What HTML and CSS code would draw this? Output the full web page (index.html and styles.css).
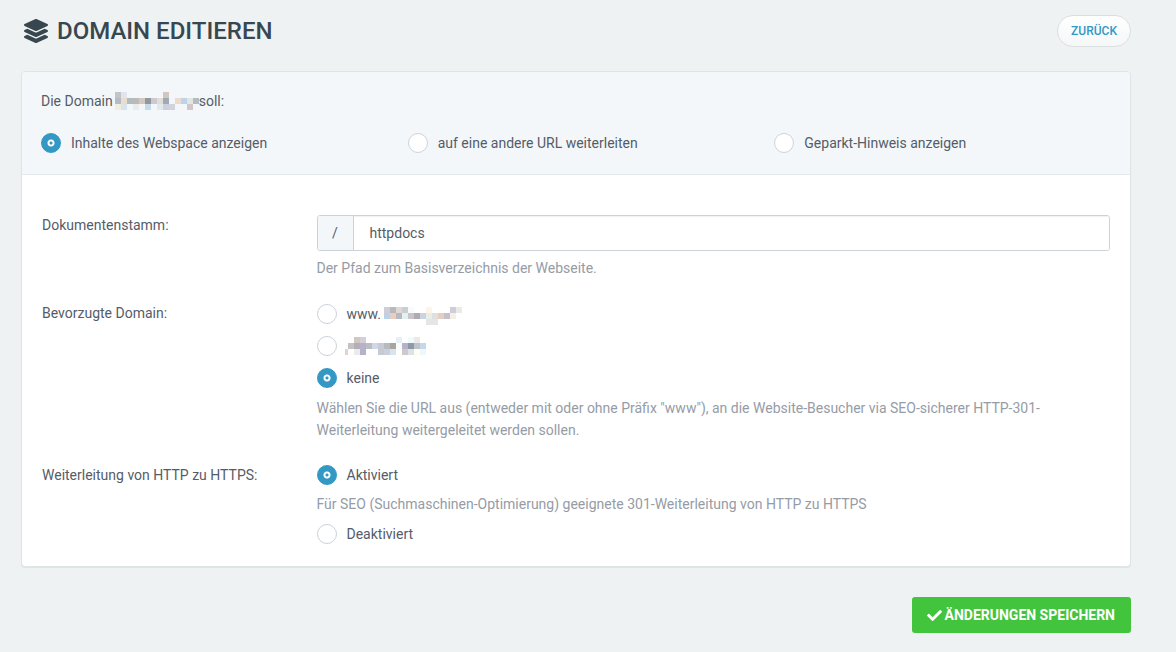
FILE: index.html
```html
<!DOCTYPE html>
<html lang="de">
<head>
<meta charset="utf-8">
<meta name="viewport" content="width=device-width, initial-scale=1">
<title>Domain editieren</title>
<link rel="stylesheet" href="styles.css">
</head>
<body>
<form class="page">
  <header class="page-header">
    <h1 class="title">
      <svg class="title-icon" viewBox="0 0 512 512" aria-hidden="true"><path d="M12.4 148l232.900 105.700c6.800 3.100 14.500 3.100 21.300 0L499.600 148c16.600-7.500 16.600-32.500 0-40L266.700 2.300a25.600 25.600 0 0 0-21.300 0L12.400 108c-16.600 7.500-16.600 32.500 0 40zM499.600 236.300l-58.100-26.300-161.600 73.300c-7.600 3.400-15.600 5.200-23.900 5.200s-16.300-1.700-23.900-5.200L70.500 210l-58.100 26.300c-16.600 7.500-16.600 32.500 0 40l232.900 105.600c6.800 3.100 14.500 3.100 21.300 0l233-105.600c16.600-7.500 16.600-32.500 0-40zM499.600 364.100l-57.900-26.200-161.800 73.400c-7.600 3.400-15.600 5.200-23.900 5.200s-16.300-1.700-23.900-5.200L70.300 337.900l-57.900 26.200c-16.600 7.500-16.600 32.500 0 40l232.900 105.600c6.800 3.100 14.500 3.100 21.300 0l233-105.600c16.600-7.500 16.600-32.500 0-40z"/></svg>
      DOMAIN EDITIEREN
    </h1>
    <button class="back" type="button">ZURÜCK</button>
  </header>

  <main class="card">
    <section class="mode" role="radiogroup" aria-labelledby="mode-label">
      <div class="line" id="mode-label">Die Domain
        <svg class="mosaic mosaic-head" width="84" height="18" viewBox="0 0 84 18" shape-rendering="crispEdges" aria-hidden="true">
          <path fill="#c3c4c5" d="M0 0h6v6h-6z"/><path fill="#dee5ef" d="M6 0h6v6h-6z"/><path fill="#d3c5c4" d="M48 0h6v6h-6z"/>
          <path fill="#b5bbc3" d="M0 6h6v6h-6zM78 6h6v6h-6z"/><path fill="#ecdccf" d="M6 6h6v6h-6zM60 6h6v6h-6z"/><path fill="#b2bcbf" d="M12 6h6v6h-6z"/><path fill="#bcbab8" d="M18 6h6v6h-6z"/><path fill="#d3c8bf" d="M24 6h6v6h-6z"/><path fill="#93979f" d="M30 6h6v6h-6z"/><path fill="#c9cbce" d="M36 6h6v6h-6z"/><path fill="#e4dcd8" d="M42 6h6v6h-6z"/><path fill="#9eaab4" d="M48 6h6v6h-6z"/><path fill="#bdd3e8" d="M66 6h6v6h-6z"/><path fill="#e0e6e2" d="M72 6h6v6h-6z"/>
          <path fill="#f2ebe2" d="M0 12h6v6h-6z"/><path fill="#d5e4ed" d="M6 12h6v6h-6z"/><path fill="#ebebea" d="M18 12h6v6h-6z"/><path fill="#c5dbe7" d="M30 12h6v6h-6z"/><path fill="#e0eaee" d="M42 12h6v6h-6z"/><path fill="#cdcfde" d="M48 12h6v6h-6z"/><path fill="#d1d5db" d="M54 12h6v6h-6z"/><path fill="#d0c7c8" d="M72 12h6v6h-6z"/>
        </svg>soll:</div>
      <div class="modes">
        <label class="option"><input class="radio" type="radio" name="mode" checked>Inhalte des Webspace anzeigen</label>
        <label class="option"><input class="radio" type="radio" name="mode">auf eine andere URL weiterleiten</label>
        <label class="option"><input class="radio" type="radio" name="mode">Geparkt-Hinweis anzeigen</label>
      </div>
    </section>

    <section class="settings">
      <div class="row">
        <label class="label" for="root">Dokumentenstamm:</label>
        <div class="control">
          <div class="path">
            <span class="prefix">/</span>
            <input class="path-input" id="root" type="text" value="httpdocs">
          </div>
          <p class="help">Der Pfad zum Basisverzeichnis der Webseite.</p>
        </div>
      </div>

      <div class="row">
        <div class="label" id="preferred-label">Bevorzugte Domain:</div>
        <div class="control" role="radiogroup" aria-labelledby="preferred-label">
          <div class="options">
            <label class="option"><input class="radio" type="radio" name="preferred"><span class="line line-low">www.
              <svg class="mosaic" width="78" height="18" viewBox="0 0 78 18" shape-rendering="crispEdges" aria-hidden="true">
                <path fill="#cfcdd9" d="M0 0h6v6h-6zM66 0h6v6h-6z"/><path fill="#b9b9bd" d="M6 0h6v6h-6zM12 6h6v6h-6z"/><path fill="#e0d8d2" d="M12 0h6v6h-6z"/><path fill="#cccdd2" d="M18 0h6v6h-6z"/><path fill="#f5fcff" d="M24 0h6v6h-6z"/><path fill="#fff4e6" d="M42 0h6v6h-6z"/><path fill="#e9e9ea" d="M72 0h6v6h-6z"/>
                <path fill="#bcd1ea" d="M0 6h6v6h-6z"/><path fill="#e5cfc2" d="M6 6h6v6h-6zM54 6h6v6h-6z"/><path fill="#e3f0f0" d="M18 6h6v6h-6z"/><path fill="#c8c4c8" d="M24 6h6v6h-6z"/><path fill="#adabb4" d="M30 6h6v6h-6z"/><path fill="#cbd3de" d="M36 6h6v6h-6z"/><path fill="#e8efe8" d="M42 6h6v6h-6z"/><path fill="#dfe1e0" d="M48 6h6v6h-6z"/><path fill="#c4c1cc" d="M60 6h6v6h-6z"/><path fill="#f5f0e6" d="M66 6h6v6h-6z"/>
                <path fill="#e5e5e5" d="M42 12h12v6h-12z"/>
              </svg></span></label>
            <label class="option"><input class="radio" type="radio" name="preferred" aria-label="Ohne www">
              <svg class="mosaic mosaic-bare" width="81" height="18" viewBox="3 0 81 18" shape-rendering="crispEdges" aria-hidden="true">
                <path fill="#d3c6bf" d="M12 0h6v6h-6z"/><path fill="#d3cfd6" d="M18 0h6v6h-6z"/><path fill="#e6f1f7" d="M54 0h6v6h-6z"/><path fill="#effaff" d="M66 0h6v6h-6z"/><path fill="#ede9e8" d="M72 0h6v6h-6z"/>
                <path fill="#c3c3c6" d="M6 6h6v6h-6z"/><path fill="#b2b0b6" d="M12 6h6v6h-6z"/><path fill="#b6b2ca" d="M18 6h6v12h-6zM60 6h6v6h-6z"/><path fill="#bbbdc1" d="M24 6h6v6h-6z"/><path fill="#cfd8e7" d="M30 6h6v6h-6z"/><path fill="#c5cad3" d="M36 6h6v12h-6z"/><path fill="#b6bac2" d="M42 6h6v6h-6z"/><path fill="#aaa59f" d="M48 6h6v6h-6z"/><path fill="#fafdff" d="M54 6h6v6h-6z"/><path fill="#8f98a6" d="M66 6h6v6h-6z"/><path fill="#bdc5cc" d="M72 6h6v6h-6z"/><path fill="#c4d8ea" d="M78 6h6v6h-6z"/>
                <path fill="#e8d2c8" d="M3 12h3v6h-3z"/><path fill="#ebebeb" d="M12 12h6v6h-6z"/><path fill="#c9d0dc" d="M42 12h6v6h-6z"/><path fill="#d6e5ef" d="M48 12h6v6h-6z"/><path fill="#cfc9c9" d="M60 12h6v6h-6z"/><path fill="#dbe2ea" d="M66 12h6v6h-6z"/><path fill="#fffdef" d="M72 12h6v6h-6z"/><path fill="#eef6ff" d="M78 12h6v6h-6z"/>
              </svg></label>
            <label class="option"><input class="radio" type="radio" name="preferred" checked>keine</label>
          </div>
          <p class="help">Wählen Sie die URL aus (entweder mit oder ohne Präfix "www"), an die Website-Besucher via SEO-sicherer HTTP-301-Weiterleitung weitergeleitet werden sollen.</p>
        </div>
      </div>

      <div class="row">
        <div class="label" id="https-label">Weiterleitung von HTTP zu HTTPS:</div>
        <div class="control" role="radiogroup" aria-labelledby="https-label">
          <label class="option"><input class="radio" type="radio" name="https" checked>Aktiviert</label>
          <p class="help">Für SEO (Suchmaschinen-Optimierung) geeignete 301-Weiterleitung von HTTP zu HTTPS</p>
          <label class="option"><input class="radio" type="radio" name="https">Deaktiviert</label>
        </div>
      </div>
    </section>
  </main>

  <footer class="actions">
    <button class="save" type="submit">
      <svg class="check" viewBox="0 0 512 512" aria-hidden="true"><path d="M173.900 439.400l-166.400-166.400c-10-10-10-26.200 0-36.200l36.200-36.200c10-10 26.200-10 36.200 0L192 312.700 432.100 72.600c10-10 26.200-10 36.200 0l36.200 36.200c10 10 10 26.200 0 36.200l-294.400 294.400c-10 10-26.200 10-36.200 0z"/></svg>
      ÄNDERUNGEN SPEICHERN
    </button>
  </footer>
</form>
</body>
</html>
```
FILE: styles.css
```css
* {
  box-sizing: border-box;
}

body {
  margin: 0;
  background: #eef2f3;
  color: #555c68;
  font: 14px/22px Roboto, "Liberation Sans", sans-serif;
}

button,
input {
  font: inherit;
  margin: 0;
}

.page {
  padding: 15px 45px 19px 21px;
}

.page-header {
  display: flex;
  align-items: center;
  justify-content: space-between;
  margin-bottom: 24px;
}

.title {
  display: flex;
  align-items: center;
  gap: 9px;
  margin: 0;
  padding-left: 3px;
  color: #38474f;
  font-size: 24px;
  line-height: 30px;
  font-weight: 500;
}

.title-icon {
  width: 24px;
  height: 24px;
  fill: currentColor;
}

.back {
  height: 32px;
  padding: 0 13px;
  border: 1px solid #dcdfe0;
  border-radius: 16px;
  background: linear-gradient(#fff, #f5f7f8);
  color: #3398c3;
  font-size: 12px;
  font-weight: 500;
}

.card {
  border: 1px solid #dfe4e6;
  border-radius: 4px;
  background: #fff;
  box-shadow: 0 1px 1px rgba(0, 0, 0, 0.06);
}

.mode {
  padding: 18px 19px 20px;
  border-bottom: 1px solid #e2e9ec;
  border-radius: 4px 4px 0 0;
  background: #f3f7fa;
}

.line {
  display: flex;
  align-items: center;
}

.line-low {
  align-items: flex-end;
}

.mosaic {
  flex: none;
  margin-left: 3px;
}

.mosaic-bare {
  margin-left: -2px;
}

.mosaic-head {
  margin-left: 2px;
}

.modes {
  display: grid;
  grid-template-columns: repeat(3, 1fr);
  gap: 30px;
  margin-top: 20px;
}

.option {
  display: flex;
  align-items: center;
  gap: 10px;
  min-height: 22px;
}

.radio {
  appearance: none;
  flex: none;
  width: 20px;
  height: 20px;
  border: 1px solid #cbd3da;
  border-radius: 50%;
  background: #fff;
}

.radio:checked {
  border-color: #3398c3;
  background: radial-gradient(circle, #3398c3 1px, #fff 2px, #fff 3px, #3398c3 4px);
}

.settings {
  display: grid;
  gap: 23px;
  padding: 39px 20px 21px;
}

.row {
  display: grid;
  grid-template-columns: repeat(4, 1fr);
  column-gap: 30px;
}

.label {
  white-space: nowrap;
}

.control {
  grid-column: span 3;
}

.path {
  display: flex;
  height: 36px;
  margin-top: 1px;
  border: 1px solid #cbd3da;
  border-radius: 3px;
  overflow: hidden;
}

.prefix {
  flex: none;
  width: 36px;
  border-right: 1px solid #cbd3da;
  background: #f3f7fa;
  line-height: 34px;
  text-align: center;
}

.path-input {
  flex: 1;
  min-width: 0;
  padding: 0 16px;
  border: 0;
  background: #fff;
  box-shadow: inset 0 1px 1px rgba(0, 0, 0, 0.06);
  color: #555c68;
}

.options {
  display: grid;
  gap: 10px;
  padding: 1px 0;
}

.help {
  margin: 7px 0 8px;
  color: #959ca6;
}

.path + .help {
  margin: 6px 0 0;
}

.options + .help {
  margin-bottom: 0;
}

.actions {
  display: flex;
  justify-content: flex-end;
  margin-top: 30px;
}

.save {
  display: flex;
  align-items: center;
  gap: 3px;
  height: 36px;
  padding: 0 16px 0 15px;
  border: 0;
  border-radius: 3px;
  background: #43c43d;
  color: #fff;
  font-weight: 700;
}

.check {
  width: 15px;
  height: 15px;
  fill: currentColor;
}
```
